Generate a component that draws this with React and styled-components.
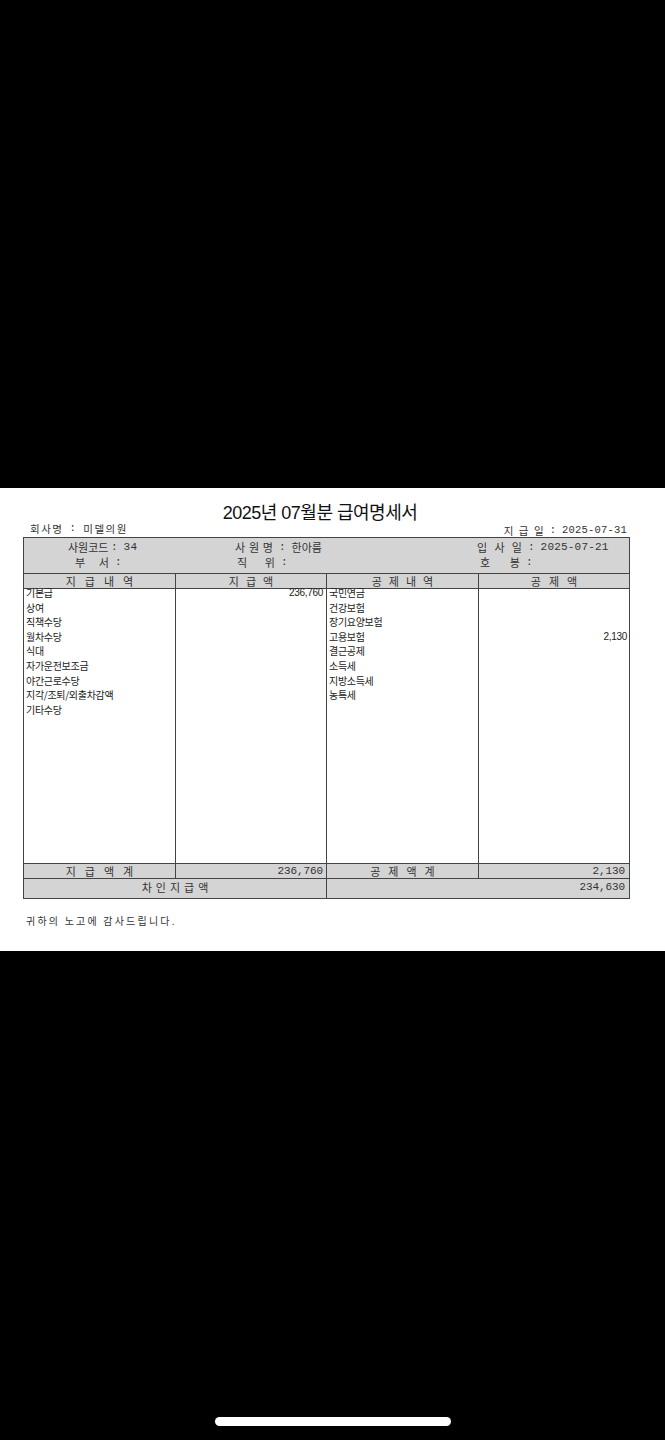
import React from 'react';
import styled, { createGlobalStyle } from 'styled-components';

const GlobalStyle = createGlobalStyle`
  html, body {
    margin: 0;
    padding: 0;
    background: #000;
  }
  body {
    font-family: "Noto Sans CJK KR", "Noto Sans", sans-serif;
    color: #222;
  }
`;

const Screen = styled.div`
  width: 665px;
  height: 1440px;
  padding-top: 488px;
  box-sizing: border-box;
  display: flex;
  flex-direction: column;
  background: #000;
  overflow: hidden;
`;

const Sheet = styled.div`
  height: 463px;
  box-sizing: border-box;
  padding: 14px 35px 0 23px;
  background: #fff;
`;

const Title = styled.h1`
  margin: 0;
  padding-right: 13px;
  text-align: center;
  font-family: "Liberation Sans", "Noto Sans CJK KR", sans-serif;
  font-size: 18px;
  font-weight: 400;
  line-height: 22px;
  letter-spacing: -0.5px;
  color: #111;
`;

const MetaRow = styled.div`
  display: flex;
  justify-content: space-between;
  align-items: flex-end;
  height: 13px;
  padding: 0 3px 0 7px;
  font-size: 10.5px;
  line-height: 13px;
  color: #333;
`;

const MetaLeft = styled.div`
  display: flex;
  margin-bottom: 2px;
  letter-spacing: 1.5px;
`;

const Field = styled.div`
  display: flex;
  align-items: center;
  padding-left: ${(p) => p.$indent || 0}px;
  white-space: nowrap;
`;

const Label = styled.span`
  display: inline-block;
  width: ${(p) => p.$w}px;
  text-align: justify;
  text-align-last: justify;
`;

const Sep = styled.span`
  margin: 0 6px 0 6px;
  font-family: "Liberation Mono", monospace;
`;

const Mono = styled.span`
  font-family: "Liberation Mono", monospace;
  letter-spacing: 0.2px;
`;

const Table = styled.div`
  border: 1px solid #444;
  font-size: 11px;
  color: #333;
`;

const InfoBlock = styled.div`
  background: #d4d4d4;
  padding: 2px 0 3px;
  border-bottom: 1px solid #444;
`;

const InfoRow = styled.div`
  display: grid;
  grid-template-columns: 167px 242px 1fr;
  padding-left: 44px;
  height: 15px;
  line-height: 15px;
`;

const Cols = styled.div`
  display: grid;
  grid-template-columns: 152px 151px 152px 1fr;
  height: ${(p) => p.$h}px;
  background: ${(p) => (p.$grey ? '#d4d4d4' : '#fff')};
  border-bottom: 1px solid #444;
  box-sizing: border-box;
`;

const Cell = styled.div`
  border-right: ${(p) => (p.$last ? 'none' : '1px solid #444')};
  display: flex;
  align-items: ${(p) => (p.$top ? 'flex-start' : 'center')};
  justify-content: ${(p) => p.$justify || 'flex-start'};
  padding: ${(p) => p.$pad || '0'};
  min-width: 0;
`;

const Spaced = styled.span`
  letter-spacing: ${(p) => p.$ls}px;
  padding-left: ${(p) => p.$ls}px;
  line-height: 14px;
  color: #333;
`;

const List = styled.div`
  display: flex;
  flex-direction: column;
  width: 100%;
  margin-top: -3px;
`;

const Line = styled.div`
  height: 14.6px;
  line-height: 14.6px;
  font-size: 10px;
  letter-spacing: -0.3px;
  color: #222;
  white-space: nowrap;
  text-align: ${(p) => (p.$right ? 'right' : 'left')};
  font-family: ${(p) =>
    p.$right ? '"Liberation Sans", sans-serif' : '"Noto Sans CJK KR", sans-serif'};
`;

const Amount = styled.span`
  font-family: "Liberation Mono", monospace;
  font-size: 11px;
  letter-spacing: -0.1px;
  line-height: 14px;
  color: #333;
`;

const NetRow = styled.div`
  display: grid;
  grid-template-columns: 303px 1fr;
  height: 19px;
  background: #d4d4d4;
`;

const Footer = styled.p`
  margin: 15px 0 0 3px;
  font-size: 10px;
  line-height: 14px;
  letter-spacing: 2.2px;
  color: #333;
`;

const HomeBar = styled.div`
  align-self: center;
  margin-top: 466px;
  width: 236px;
  height: 9px;
  border-radius: 5px;
  background: #fff;
`;

const earnings = [
  ['기본급', '236,760'],
  ['상여', ''],
  ['직책수당', ''],
  ['월차수당', ''],
  ['식대', ''],
  ['자가운전보조금', ''],
  ['야간근로수당', ''],
  ['지각/조퇴/외출차감액', ''],
  ['기타수당', ''],
];

const deductions = [
  ['국민연금', ''],
  ['건강보험', ''],
  ['장기요양보험', ''],
  ['고용보험', '2,130'],
  ['결근공제', ''],
  ['소득세', ''],
  ['지방소득세', ''],
  ['농특세', ''],
];

const Payslip = () => {
  return (
    <Sheet>
      <Title>2025년 07월분 급여명세서</Title>
      <MetaRow>
        <MetaLeft>
          <span>회사명</span>
          <Sep>:</Sep>
          <span>미델의원</span>
        </MetaLeft>
        <Field>
          <Label $w={40}>지 급 일</Label>
          <Sep>:</Sep>
          <Mono>2025-07-31</Mono>
        </Field>
      </MetaRow>

      <Table>
        <InfoBlock>
          <InfoRow>
            <Field>
              <Label $w={37}>사원코드</Label>
              <Sep>:</Sep>
              <Mono>34</Mono>
            </Field>
            <Field>
              <Label $w={38}>사 원 명</Label>
              <Sep>:</Sep>
              <span>한아름</span>
            </Field>
            <Field>
              <Label $w={45}>입 사 일</Label>
              <Sep>:</Sep>
              <Mono>2025-07-21</Mono>
            </Field>
          </InfoRow>
          <InfoRow>
            <Field $indent={7}>
              <Label $w={34}>부 서</Label>
              <Sep>:</Sep>
            </Field>
            <Field $indent={2}>
              <Label $w={38}>직 위</Label>
              <Sep>:</Sep>
            </Field>
            <Field $indent={3}>
              <Label $w={40}>호 봉</Label>
              <Sep>:</Sep>
            </Field>
          </InfoRow>
        </InfoBlock>

        <Cols $h={15} $grey>
          <Cell $justify="center"><Spaced $ls={9}>지급내역</Spaced></Cell>
          <Cell $justify="center"><Spaced $ls={7}>지급액</Spaced></Cell>
          <Cell $justify="center"><Spaced $ls={7}>공제내역</Spaced></Cell>
          <Cell $justify="center" $last><Spaced $ls={8}>공제액</Spaced></Cell>
        </Cols>

        <Cols $h={275}>
          <Cell $top $pad="0 0 0 2px">
            <List>
              {earnings.map(([name]) => <Line key={name}>{name}</Line>)}
            </List>
          </Cell>
          <Cell $top $pad="0 3px 0 0">
            <List>
              {earnings.map(([name, amt]) => <Line key={name} $right>{amt}</Line>)}
            </List>
          </Cell>
          <Cell $top $pad="0 0 0 2px">
            <List>
              {deductions.map(([name]) => <Line key={name}>{name}</Line>)}
            </List>
          </Cell>
          <Cell $top $last $pad="0 2px 0 0">
            <List>
              {deductions.map(([name, amt]) => <Line key={name} $right>{amt}</Line>)}
            </List>
          </Cell>
        </Cols>

        <Cols $h={15} $grey>
          <Cell $justify="center"><Spaced $ls={9}>지급액계</Spaced></Cell>
          <Cell $justify="flex-end" $pad="0 3px 0 0"><Amount>236,760</Amount></Cell>
          <Cell $justify="center"><Spaced $ls={8}>공제액계</Spaced></Cell>
          <Cell $justify="flex-end" $last $pad="0 4px 0 0"><Amount>2,130</Amount></Cell>
        </Cols>

        <NetRow>
          <Cell $top $justify="center" $pad="1px 0 0"><Spaced $ls={4}>차인지급액</Spaced></Cell>
          <Cell $top $last $justify="flex-end" $pad="1px 4px 0 0"><Amount>234,630</Amount></Cell>
        </NetRow>
      </Table>

      <Footer>귀하의 노고에 감사드립니다.</Footer>
    </Sheet>
  );
};

const App = () => {
  return (
    <>
      <GlobalStyle />
      <Screen>
        <Payslip />
        <HomeBar />
      </Screen>
    </>
  );
};

export default App;
